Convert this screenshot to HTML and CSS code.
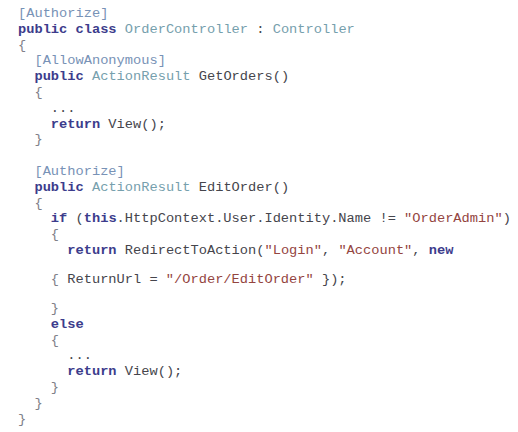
FILE: index.html
```html
<!DOCTYPE html>
<html>
<head>
<meta charset="utf-8">
<link rel="stylesheet" href="styles.css">
</head>
<body>
<div class="code">
<div class="ln"><span class="at">[Authorize]</span></div>
<div class="ln"><span class="kw">public</span> <span class="kw">class</span> <span class="ty">OrderController</span> : <span class="ty">Controller</span></div>
<div class="ln"><span class="br">{</span></div>
<div class="ln">  <span class="at">[AllowAnonymous]</span></div>
<div class="ln">  <span class="kw">public</span> <span class="ty">ActionResult</span> GetOrders()</div>
<div class="ln">  <span class="br">{</span></div>
<div class="ln">    ...</div>
<div class="ln">    <span class="kw">return</span> View();</div>
<div class="ln">  <span class="br">}</span></div>
<div class="ln"> </div>
<div class="ln">  <span class="at">[Authorize]</span></div>
<div class="ln">  <span class="kw">public</span> <span class="ty">ActionResult</span> EditOrder()</div>
<div class="ln">  <span class="br">{</span></div>
<div class="ln">    <span class="kw">if</span> (<span class="kw">this</span>.HttpContext.User.Identity.Name != <span class="st">"OrderAdmin"</span>)</div>
<div class="ln">    <span class="br">{</span></div>
<div class="ln">      <span class="kw">return</span> RedirectToAction(<span class="st">"Login"</span>, <span class="st">"Account"</span>, <span class="kw">new</span></div>
<div class="ln gap">    <span class="br">{</span> ReturnUrl = <span class="st">"/Order/EditOrder"</span> });</div>
<div class="ln gap">    <span class="br">}</span></div>
<div class="ln">    <span class="kw">else</span></div>
<div class="ln">    <span class="br">{</span></div>
<div class="ln">      ...</div>
<div class="ln">      <span class="kw">return</span> View();</div>
<div class="ln">    <span class="br">}</span></div>
<div class="ln">  <span class="br">}</span></div>
<div class="ln"><span class="br">}</span></div>
</div>
</body>
</html>
```
FILE: styles.css
```css
html, body {
  margin: 0;
  padding: 0;
  background: #ffffff;
}
.code {
  padding: 6px 0 0 18px;
  font-family: "Courier New", "Nimbus Mono PS", "Nimbus Mono L", "FreeMono", "Liberation Mono", monospace;
  font-size: 13.7px;
  line-height: 15.8px;
  color: #45454c;
}
.ln {
  white-space: pre;
  height: 15.8px;
}
.gap {
  margin-top: 13.2px;
}
.kw {
  color: #3c3c8c;
  font-weight: bold;
}
.ty {
  color: #76a0ad;
}
.at {
  color: #7892b6;
}
.st {
  color: #94453f;
}
.br {
  color: #808088;
}
```
